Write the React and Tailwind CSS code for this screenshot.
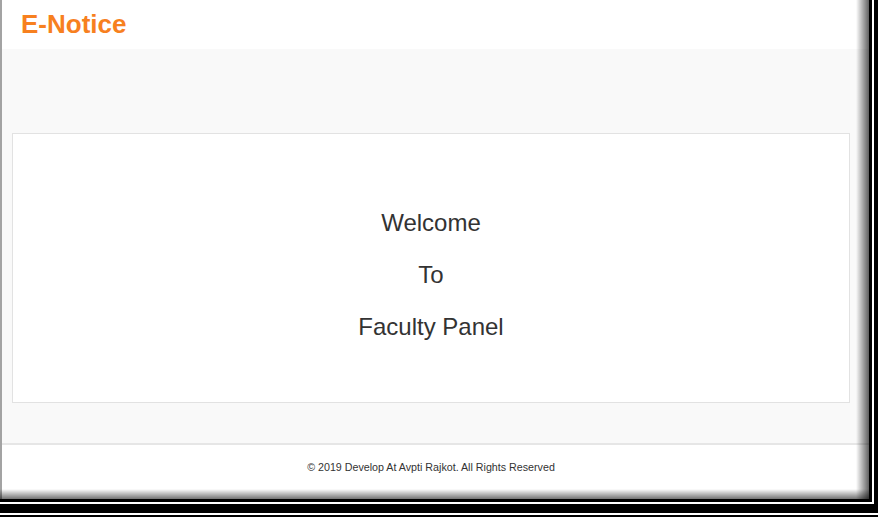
export default function App() {
  const font = { fontFamily: '"Liberation Sans", Arial, sans-serif' };
  return (
    <div className="w-[878px] h-[517px] bg-black overflow-hidden" style={font}>
      <div className="w-[874px] h-[504px] border-r-2 border-b-2 border-white bg-black">
        <div className="relative w-[869px] h-[499px] flex overflow-hidden bg-white">
          <div className="w-[2px] bg-[#a3a3a3]" />
          <div className="flex flex-col w-[867px]">
            <header className="h-[49px] bg-white pl-[19px] pt-[8px]">
              <h1 className="text-[26px] leading-[32px] font-bold text-[#f7801f]">E-Notice</h1>
            </header>
            <main className="bg-[#f9f9f9] pt-[84px] pb-[40px] pl-[10px] pr-[19px]">
              <div className="h-[270px] bg-white border border-[#e2e2e2] flex flex-col items-center pt-[76px] gap-[26px] text-[24px] leading-[26px] text-[#333333]">
                <p>Welcome</p>
                <p>To</p>
                <p>Faculty Panel</p>
              </div>
            </main>
            <footer className="flex-1 border-t-2 border-[#e6e6e6] bg-white pt-[14px] pr-[9px] text-center text-[10.7px] leading-[16px] text-[#333333]">
              © 2019 Develop At Avpti Rajkot. All Rights Reserved
            </footer>
          </div>
          <div className="absolute top-0 right-0 h-full w-[13px] bg-gradient-to-r from-transparent to-[rgba(0,0,0,0.62)]" />
          <div className="absolute bottom-0 left-0 w-full h-[10px] bg-gradient-to-b from-transparent to-[rgba(0,0,0,0.55)]" />
        </div>
      </div>
      <div className="mt-[9px] h-[2px] w-full bg-white" />
    </div>
  );
}
